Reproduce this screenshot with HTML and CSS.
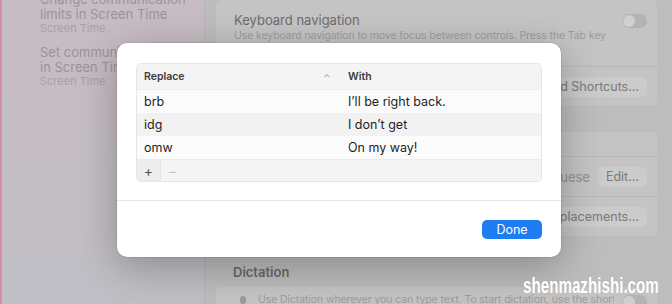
FILE: index.html
```html
<!DOCTYPE html>
<html lang="en">
<head>
  <meta charset="UTF-8" />
  <title>Text Replacements</title>
  <link rel="stylesheet" href="styles.css">
</head>
<body>
  <div class="app">
    <aside class="sidebar">
      <div class="result">
        <div class="result-title">Change communication<br>limits in Screen Time</div>
        <div class="result-sub">Screen Time</div>
      </div>
      <div class="result">
        <div class="result-title">Set communication limits<br>in Screen Time</div>
        <div class="result-sub">Screen Time</div>
      </div>
    </aside>

    <main class="pane">
      <div class="card first">
        <div class="row top">
          <div class="row-text">
            <div class="row-title">Keyboard navigation</div>
            <div class="row-desc">Use keyboard navigation to move focus between controls. Press the Tab key<br>to move focus forward and Shift Tab to move focus backward.</div>
          </div>
          <span class="toggle"></span>
        </div>
        <div class="row right">
          <button class="pane-btn">Keyboard Shortcuts…</button>
        </div>
      </div>

      <div class="card second">
        <div class="row label-row">
          <div class="row-title">Input Sources</div>
        </div>
        <div class="row right">
          <span class="row-value">English — U.S., Portuguese</span>
          <button class="pane-btn">Edit…</button>
        </div>
        <div class="row right">
          <button class="pane-btn">Text Replacements…</button>
        </div>
      </div>

      <h3 class="section">Dictation</h3>
      <div class="card">
        <div class="row top dictation">
          <span class="mic"></span>
          <div class="row-desc">Use Dictation wherever you can type text. To start dictation, use the shortcut</div>
          <span class="toggle"></span>
        </div>
      </div>
    </main>
  </div>

  <!-- Text replacements sheet -->
  <div class="sheet">
    <div class="table">
      <div class="thead">
        <div class="col-replace">Replace <span class="sort">&#8963;</span></div>
        <div class="col-with">With</div>
      </div>
      <div class="trow">
        <div class="col-replace">brb</div>
        <div class="col-with">I’ll be right back.</div>
      </div>
      <div class="trow alt">
        <div class="col-replace">idg</div>
        <div class="col-with">I don’t get</div>
      </div>
      <div class="trow">
        <div class="col-replace">omw</div>
        <div class="col-with">On my way!</div>
      </div>
      <div class="tfoot">
        <span class="tool add">+</span>
        <span class="tool remove">−</span>
      </div>
    </div>
    <div class="sheet-footer">
      <button class="done">Done</button>
    </div>
  </div>

  <div class="watermark">shenmazhishi.com</div>
</body>
</html>
```

FILE: styles.css
```css
:root {
  --pane-bg: #bdbdbd;
  --card-bg: #c4c4c4;
  --line: rgba(0, 0, 0, 0.06);
  --text-dim: #6d6d6d;
  --text-faint: #9c9c9c;
  --blue: #1f7df3;
}
body {
  margin: 0;
  width: 672px;
  height: 304px;
  overflow: hidden;
  font-family: Inter, 'Noto Sans', sans-serif;
  background: var(--pane-bg);
}
.app {
  display: flex;
  height: 304px;
}
.sidebar {
  flex: none;
  width: 205px;
  border-left: 2px solid #d48ea9;
  border-right: 1px solid #b4b0b3;
  background: linear-gradient(180deg, #c7bcc4 0%, #c3bec3 60%, #bfbfc6 100%);
  padding: 0 0 0 38px;
  box-sizing: border-box;
  white-space: nowrap;
}
.result {
  margin-top: -8px;
  margin-bottom: 10px;
}
.result + .result {
  margin-top: 0;
}
.result-title {
  font-size: 13px;
  line-height: 15px;
  color: #9d919a;
}
.result-sub {
  font-size: 11px;
  line-height: 13px;
  color: #aa9fa7;
}
.pane {
  flex: 1;
  min-width: 0;
  padding: 0 14px 0 10px;
}
.card {
  background: var(--card-bg);
  border-radius: 6px;
  border: 1px solid rgba(0, 0, 0, 0.04);
}
.card.first {
  margin-top: -1px;
  padding-top: 6px;
}
.card.second {
  margin-top: 24px;
}
.row {
  display: flex;
  align-items: center;
  padding: 0 10px 0 18px;
  border-top: 1px solid var(--line);
}
.row:first-child {
  border-top: none;
}
.row.top {
  align-items: flex-start;
  padding-top: 6px;
  height: 54px;
}
.row.right {
  justify-content: flex-end;
  height: 39px;
  gap: 8px;
}
.row.label-row {
  height: 24px;
}
.row-text {
  flex: 1;
  min-width: 0;
}
.row-title {
  font-size: 13px;
  line-height: 16px;
  color: var(--text-dim);
}
.row-desc {
  font-size: 10.5px;
  letter-spacing: -0.1px;
  line-height: 14px;
  color: var(--text-faint);
  margin-top: 1px;
  white-space: nowrap;
  overflow: hidden;
}
.row-value {
  font-size: 13px;
  color: #8e8e8e;
}
.toggle {
  flex: none;
  width: 25px;
  height: 14px;
  border-radius: 7px;
  background: #b3b3b3;
  margin-top: 2px;
  margin-left: 8px;
  position: relative;
}
.toggle::after {
  content: "";
  position: absolute;
  left: 1px;
  top: 1px;
  width: 12px;
  height: 12px;
  border-radius: 50%;
  background: #cfcfcf;
}
.pane-btn {
  font-family: Inter, 'Noto Sans', sans-serif;
  font-size: 12.5px;
  color: #7a7a7a;
  background: #cbcbcb;
  border: none;
  border-radius: 5px;
  padding: 2px 8px;
  height: 20px;
}
.section {
  margin: 27px 0 6px 18px;
  font-size: 13px;
  line-height: 16px;
  font-weight: 600;
  color: #6a6a6a;
}
.row.dictation {
  padding-top: 6px;
}
.mic {
  flex: none;
  width: 6px;
  height: 8px;
  border-radius: 3px;
  background: #9a9a9a;
  margin: 3px 12px 0 6px;
}
.row.dictation .row-desc {
  flex: 1;
  margin-top: 0;
}

/* Sheet */
.sheet {
  position: absolute;
  left: 117px;
  top: 43px;
  width: 444px;
  height: 214px;
  background: #fff;
  border-radius: 10px;
  box-shadow: 0 10px 40px rgba(0, 0, 0, 0.28), 0 0 0 0.5px rgba(0, 0, 0, 0.15);
  padding: 20px 19px 0 19px;
  box-sizing: border-box;
}
.table {
  border: 1px solid #e6e6e6;
  border-radius: 5px;
  overflow: hidden;
  font-size: 12.5px;
  color: #1f1f1f;
}
.thead, .trow {
  display: flex;
  align-items: center;
}
.thead {
  height: 25px;
  background: #f4f4f4;
  border-bottom: 1px solid #ececec;
  font-size: 10.5px;
  font-weight: 600;
  color: #3a3a3a;
}
.trow {
  height: 23px;
  background: #fbfbfb;
}
.trow.alt {
  background: #f2f2f2;
}
.col-replace {
  width: 204px;
  padding-left: 7px;
  position: relative;
}
.col-with {
  flex: 1;
}
.sort {
  position: absolute;
  left: 186px;
  top: 2px;
  font-size: 10px;
  font-weight: 400;
  color: #aaa;
}
.tfoot {
  display: flex;
  height: 21px;
  background: #f4f4f4;
  border-top: 1px solid #ececec;
}
.tool {
  width: 23px;
  display: flex;
  align-items: center;
  justify-content: center;
  font-size: 14px;
  color: #555;
}
.tool.add {
  background: #ededed;
  border-right: 1px solid #e6e6e6;
}
.tool.remove {
  color: #c2c2c2;
}
.sheet-footer {
  margin: 18px -19px 0;
  border-top: 1px solid #e6e6e6;
  padding: 19px 19px 0;
  display: flex;
  justify-content: flex-end;
}
.done {
  font-family: Inter, 'Noto Sans', sans-serif;
  width: 60px;
  height: 19px;
  border: none;
  border-radius: 5px;
  background: var(--blue);
  color: #fff;
  font-size: 12.5px;
  padding: 0;
}
.watermark {
  position: absolute;
  left: 523px;
  top: 273px;
  font-family: 'Liberation Sans', Arial, sans-serif;
  font-weight: 700;
  font-size: 22px;
  color: #fff;
  transform: scaleX(0.69);
  transform-origin: left top;
  white-space: nowrap;
  text-shadow: 0 0 2px rgba(0, 0, 0, 0.1);
}
```
